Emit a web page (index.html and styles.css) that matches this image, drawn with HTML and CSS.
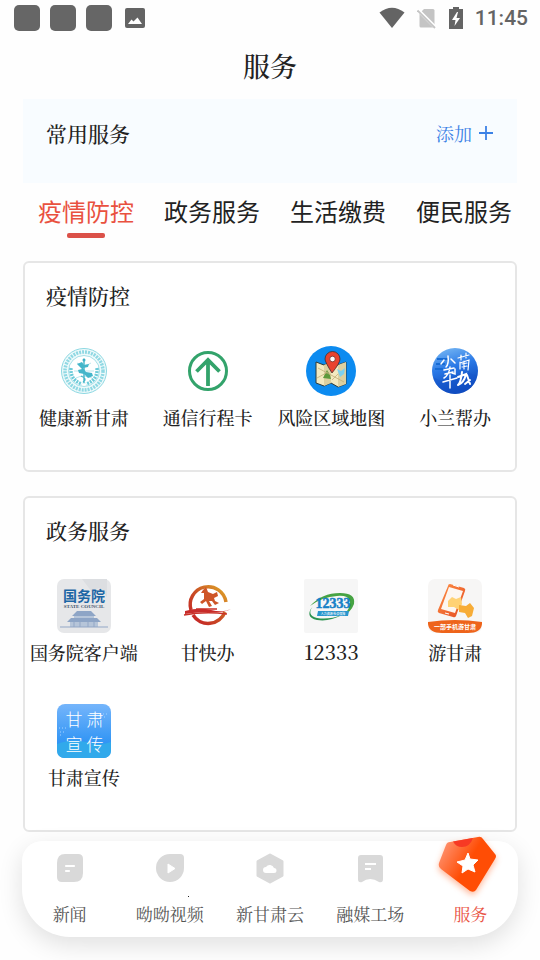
FILE: index.html
```
<!DOCTYPE html>
<html lang="zh-CN">
<head>
    <meta charset="UTF-8">
    <meta name="viewport" content="width=device-width, initial-scale=1.0">
    <title>服务</title>
    <link rel="stylesheet" href="styles.css">
</head>
<body>
    <!-- 状态栏 -->
    <div class="status-bar">
        <div class="status-left">
            <span class="app-dot"></span>
            <span class="app-dot"></span>
            <span class="app-dot"></span>
            <svg class="picture-icon" viewBox="0 0 20 20">
                <rect width="20" height="20" rx="2" fill="#646464"/>
                <path d="M3 16 L6.5 11.5 L8.5 13.5 L12.5 9.5 L17 16 Z" fill="#fff"/>
            </svg>
        </div>
        <div class="status-right">
            <svg width="26" height="22" viewBox="0 0 26 22">
                <path d="M0.5 5.5 Q13 -4 25.5 5.5 L13 21 Z" fill="#646464"/>
            </svg>
            <svg width="20" height="22" viewBox="0 0 20 22">
                <path d="M7 2 H16 Q17.5 2 17.5 3.5 V19 Q17.5 20.5 16 20.5 H4 Q2.5 20.5 2.5 19 V6.5 Z" fill="#c4c4c4"/>
                <path d="M0.5 2.5 L19 21" stroke="#fff" stroke-width="3.5"/>
                <path d="M0.5 3.5 L18 21" stroke="#c4c4c4" stroke-width="1.8"/>
            </svg>
            <svg width="14" height="22" viewBox="0 0 14 22">
                <path d="M4 0 H10 V2 H14 V22 H0 V2 H4 Z" fill="#646464"/>
                <path d="M8 5 L3 13 H6.5 L5.5 19 L11 11 H7.5 L9 5 Z" fill="#fff"/>
            </svg>
            <span class="clock">11:45</span>
        </div>
    </div>

    <h1>服务</h1>

    <main>
        <!-- 常用服务 -->
        <section class="common">
            <h2>常用服务</h2>
            <button class="add-button">添加
                <svg width="14" height="14" viewBox="0 0 14 14">
                    <path d="M7 0 V14 M0 7 H14" stroke="#3c82e6" stroke-width="1.8"/>
                </svg>
            </button>
        </section>

        <!-- 分类标签 -->
        <div class="tabs">
            <button class="tab active">疫情防控</button>
            <button class="tab">政务服务</button>
            <button class="tab">生活缴费</button>
            <button class="tab">便民服务</button>
        </div>

        <section class="card">
            <h2>疫情防控</h2>
            <div class="services">
                <a class="service" href="#">
                    <svg class="service-icon" viewBox="0 0 54 54">
                        <circle cx="27" cy="27" r="22.5" fill="#effafb" stroke="#8cd8e2" stroke-width="1"/>
                        <circle cx="27" cy="27" r="19" fill="none" stroke="#8fd8e3" stroke-width="3.5" stroke-dasharray="2 1"/>
                        <circle cx="27" cy="27" r="15.5" fill="#fff" stroke="#a5e0e8" stroke-width="1"/>
                        <path d="M17 27 H37 M27 14 V40 M20 19 Q27 24 34 19 M19 34 Q27 30 35 34" fill="none" stroke="#a9e0e8" stroke-width="0.8"/>
                        <path d="M14 24 Q13 36 25 40 M40 24 Q41 36 29 40" fill="none" stroke="#6ccbd9" stroke-width="3.5" stroke-dasharray="2 1"/>
                        <path d="M20 20 L25 18 L27 21 L32 20 L31 23 L26 24 L29 28 L35 29 L36 32 L31 34 L27 30 L22 29 L21 26 L25 25 Z" fill="#45b6ca"/>
                        <circle cx="27" cy="16" r="1.5" fill="#38aec4"/>
                        <path d="M27 16 V39 M24 32 Q31 35 26 38" fill="none" stroke="#45b6ca" stroke-width="1.3"/>
                    </svg>
                    <span>健康新甘肃</span>
                </a>
                <a class="service" href="#">
                    <svg class="service-icon" viewBox="0 0 54 54">
                        <circle cx="27" cy="27" r="18.5" fill="#fff" stroke="#33a36b" stroke-width="3"/>
                        <path d="M27 42 V15 M15.500 27.500 L27 16 L38.500 27.500" fill="none" stroke="#33a36b" stroke-width="3.8"/>
                    </svg>
                    <span>通信行程卡</span>
                </a>
                <a class="service" href="#">
                    <svg class="service-icon" viewBox="0 0 54 54">
                        <circle cx="27" cy="27" r="25" fill="#0c8bf0"/>
                        <path d="M12 18 L20 21 L27 18 L34 21 L42 18 V40 L34 43 L27 39 L20 42 L12 39 Z" fill="#f3e9c0" stroke="#2c3a3a" stroke-width="1"/>
                        <path d="M20 21 L27 18 V39 L20 42 Z M34 21 L42 18 V40 L34 43 Z" fill="#ddd0a0"/>
                        <path d="M19 34 L23 26 L26 31 L27 35 Z" fill="#5f9a3c"/>
                        <path d="M33 25 L37 27 L41 24 L40 30 L36 33 Z" fill="#7ed0ee"/>
                        <path d="M14 24 L40 38 M13 34 L24 28 M28 36 L34 30" fill="none" stroke="#c0ad79" stroke-width="0.8"/>
                        <path d="M28 29 Q21 18 21 15 A7.5 7.5 0 0 1 36 15 Q36 19 28 29 Z" fill="#e9432f" stroke="#443030" stroke-width="0.8"/>
                        <circle cx="28.5" cy="15" r="2.8" fill="#fff" stroke="#702c25" stroke-width="0.8"/>
                    </svg>
                    <span>风险区域地图</span>
                </a>
                <a class="service" href="#">
                    <svg class="service-icon" viewBox="0 0 54 54">
                        <defs>
                            <linearGradient id="lan" x1="0" y1="0" x2="0.3" y2="1">
                                <stop offset="0" stop-color="#80bff5"/>
                                <stop offset="0.5" stop-color="#2978e6"/>
                                <stop offset="1" stop-color="#0a45b8"/>
                            </linearGradient>
                        </defs>
                        <circle cx="27" cy="27" r="23" fill="url(#lan)"/>
                        <path d="M5 33 L13 37 L28 32 L39 28 L49 32 Q45 48 27 50 Q9 48 5 33 Z" fill="#1556cc" opacity="0.5"/>
                        <path d="M9 15 H20 M8 20 H17 M7 25 H15" stroke="#176bd4" stroke-width="2"/>
                        <path d="M20 12 Q21 20 18 23 M16 16 L13 20 M23 15 L27 19 M16 26 L26 24 M17 30 L25 28 M22 23 Q21 31 16 34 M27 25 V30 L24 29 M15 38 L29 34 M22 31 V44" fill="none" stroke="#fff" stroke-width="1.5" stroke-linecap="round"/>
                        <path d="M30 14 L41 11 M33 11 V16 M38 9 V14 M32 18 V25 M32 19 L41 16 L40 26 M34 20 L39 19 M36 17 V25 M34 23 L39 22" fill="none" stroke="#fff" stroke-width="1.2" stroke-linecap="round"/>
                        <path d="M30 33 L38 30 Q36 39 30 41 M34 28 Q33 38 30 41 M39 31 L42 40 M37 40 L42 36" fill="none" stroke="#fff" stroke-width="2" stroke-linecap="round"/>
                    </svg>
                    <span>小兰帮办</span>
                </a>
            </div>
        </section>

        <section class="card">
            <h2>政务服务</h2>
            <div class="services">
                <a class="service" href="#">
                    <svg class="service-icon" viewBox="0 0 54 54">
                        <rect width="54" height="54" rx="7" fill="#e6e7e9"/>
                        <path d="M25 0 H50 V18 L42 9 L35 13 Z" fill="#dcdee1"/>
                        <text x="27" y="22" class="logo-text" font-size="14" font-weight="bold" fill="#1c66a5">国务院</text>
                        <text x="27" y="29" class="logo-serif" font-size="5" font-weight="bold" fill="#44566e">STATE COUNCIL</text>
                        <path d="M20 32 H34 L39 37 H15 Z M14 39 H40 L44 43 H10 Z" fill="#8ea5c6"/>
                        <path d="M17 37 H37 V39 H17 Z M13 43 H41 V48 H13 Z" fill="#b6c5d9"/>
                        <path d="M3 48 H51 M17 43 V48 M23 43 V48 M31 43 V48 M37 43 V48" stroke="#93a7c6" stroke-width="1"/>
                    </svg>
                    <span>国务院客户端</span>
                </a>
                <a class="service" href="#">
                    <svg class="service-icon" viewBox="0 0 54 54">
                        <defs>
                            <linearGradient id="horse" x1="0" y1="1" x2="1" y2="0">
                                <stop offset="0" stop-color="#c41f27"/>
                                <stop offset="0.5" stop-color="#c94e24"/>
                                <stop offset="1" stop-color="#e0a928"/>
                            </linearGradient>
                        </defs>
                        <path d="M10 31 A18 18 0 1 1 45 23 M12 36 A18 18 0 0 0 44 33" fill="none" stroke="url(#horse)" stroke-width="3.5"/>
                        <path d="M4 32 Q18 28 30 31 T50 30 Q42 34 31 33 Q15 33 4 35 Z" fill="#c82b29"/>
                        <path d="M3 36 Q24 32 46 35 M15 30 H36" fill="none" stroke="#c93128" stroke-width="1.5"/>
                        <path d="M22 11 L25 8 L27 13 L32 15 L36 13 L37 17 L33 19 L34 22 L38 24 L34 26 L31 22 L28 22 L31 27 L28 28 L25 22 L21 25 L19 23 L23 20 L23 14 L20 14 Z" fill="#ce5527"/>
                    </svg>
                    <span>甘快办</span>
                </a>
                <a class="service" href="#">
                    <svg class="service-icon" viewBox="0 0 54 54">
                        <rect width="54" height="54" rx="2" fill="#f6f6f6"/>
                        <path d="M6 27 Q18 14 36 14 Q52 14 50 25 Q47 33 39 37 Q47 29 46 22 Q44 16 33 17 Q18 18 6 27 Z" fill="#46a343"/>
                        <path d="M9 27 Q2 36 13 39 Q25 41 38 36 Q25 43 13 41 Q0 38 9 27 Z" fill="#2b9350"/>
                        <text x="29" y="29" class="logo-serif" font-size="14" font-weight="bold" fill="#1681c7" stroke="#1681c7" stroke-width="0.5">12333</text>
                        <path d="M14 32 H45 L44 37 H13 Z" fill="#2996cd"/>
                        <text x="29" y="36" class="logo-text" font-size="3" fill="#fff">人力资源 社会保障</text>
                    </svg>
                    <span class="number">12333</span>
                </a>
                <a class="service" href="#">
                    <svg class="service-icon" viewBox="0 0 54 54">
                        <defs>
                            <linearGradient id="travel" x1="0" y1="0" x2="1" y2="1">
                                <stop offset="0" stop-color="#ff9145"/>
                                <stop offset="1" stop-color="#e44b22"/>
                            </linearGradient>
                        </defs>
                        <rect width="54" height="54" rx="7" fill="#f7f6f5"/>
                        <path d="M22 5 L36 9 Q38 10 37 12 L28 37 Q27 39 25 38 L11 34 Q9 33 10 31 L20 7 Q20 5 22 5 Z" fill="url(#travel)"/>
                        <path d="M21 8 L35 12 L27 34 L13 30 Z" fill="#fdf6f0"/>
                        <path d="M25 6 L31 8 M17 34 L21 35" stroke="#fff" stroke-width="1"/>
                        <path d="M20 22 L24 18 L28 20 L33 18 L34 25 L31 31 L26 28 L20 28 Z" fill="#ffd274"/>
                        <path d="M31 26 L38 27 L42 24 L46 29 L44 37 L40 39 L37 34 L31 33 Z" fill="#f7ac36"/>
                        <path d="M0 43 Q27 39 54 43 V45 Q53 54 40 54 H14 Q1 54 0 45 Z" fill="#ee641b"/>
                        <text x="27" y="50" class="logo-text" font-size="6" font-weight="bold" fill="#fff">一部手机游甘肃</text>
                    </svg>
                    <span>游甘肃</span>
                </a>
                <a class="service" href="#">
                    <svg class="service-icon" viewBox="0 0 54 54">
                        <defs>
                            <linearGradient id="sky" x1="0" y1="0" x2="0" y2="1">
                                <stop offset="0" stop-color="#75b5fb"/>
                                <stop offset="1" stop-color="#1688f2"/>
                            </linearGradient>
                        </defs>
                        <rect width="54" height="54" rx="8" fill="url(#sky)"/>
                        <path d="M0 40 Q15 34 29 38 T54 38 V46 Q54 54 46 54 H8 Q0 54 0 46 Z" fill="#31a9eb"/>
                        <path d="M2 24 H11 M3 28 H8 M43 10 H52 M44 13 H50 M3 31 H6" stroke="#a7d3ff" stroke-width="1" stroke-dasharray="1 2"/>
                        <text x="17" y="22" class="logo-text thin" font-size="17" fill="#fff">甘</text>
                        <text x="38" y="22" class="logo-text thin" font-size="17" fill="#fff">肃</text>
                        <text x="17" y="47" class="logo-text thin" font-size="17" fill="#fff">宣</text>
                        <text x="38" y="47" class="logo-text thin" font-size="17" fill="#fff">传</text>
                    </svg>
                    <span>甘肃宣传</span>
                </a>
            </div>
        </section>
    </main>

    <!-- 底部导航 -->
    <nav class="bottom-nav">
        <a class="nav-item" href="#">
            <svg class="nav-icon" viewBox="0 0 28 28">
                <path d="M9 0 H22 Q27 0 27 5 V19 Q27 28 18 28 H6 Q1 28 1 23 V9 Q1 0 9 0 Z" fill="#d9d9d9"/>
                <path d="M10 12 H18 M10 17 H13" stroke="#fff" stroke-width="2.2" stroke-linecap="round"/>
            </svg>
            <span>新闻</span>
        </a>
        <a class="nav-item" href="#">
            <svg class="nav-icon" viewBox="0 0 28 28">
                <path d="M14 0 H24 Q28 0 28 4 V14 A14 14 0 1 1 14 0 Z" fill="#d9d9d9"/>
                <path d="M12 10 L19 14.5 L12 19 Z" fill="#fff" stroke="#fff" stroke-width="1" stroke-linejoin="round"/>
                <rect x="32" y="42" width="1" height="1" fill="#222"/>
            </svg>
            <span>呦呦视频</span>
        </a>
        <a class="nav-item" href="#">
            <svg class="nav-icon" viewBox="0 0 28 28">
                <path d="M14 1 L26 7.5 V21.5 L14 28 L2 21.5 V7.5 Z" fill="#d9d9d9" stroke="#d9d9d9" stroke-width="3" stroke-linejoin="round"/>
                <path d="M10 19 A3 3 0 0 1 10 13 A4.5 4.5 0 0 1 18 14 A2.5 2.5 0 0 1 18 19 Z" fill="#fff"/>
            </svg>
            <span>新甘肃云</span>
        </a>
        <a class="nav-item" href="#">
            <svg class="nav-icon" viewBox="0 0 28 28">
                <path d="M5 1 H24 Q27 1 27 4 V25 Q27 29 23 28 Q14 22 6 28 Q2 29 2 25 V4 Q2 1 5 1 Z" fill="#d9d9d9"/>
                <path d="M9 10 H20 M9 15 H15" stroke="#fff" stroke-width="2.2"/>
            </svg>
            <span>融媒工场</span>
        </a>
        <a class="nav-item current" href="#">
            <svg class="nav-icon" viewBox="0 0 28 28">
                <defs>
                    <linearGradient id="badge" x1="0" y1="0.2" x2="0.5" y2="0.5">
                        <stop offset="0" stop-color="#ff9574"/>
                        <stop offset="1" stop-color="#ff4d05"/>
                    </linearGradient>
                </defs>
                <path class="badge" d="M-6 -12 L22 -17 Q25 -18 27 -15 L39 0 Q41 2 39 5 L20 36 Q18 39 14 37 L-15 15 Q-18 13 -17 9 L-10 -9 Q-9 -12 -6 -12 Z" fill="url(#badge)"/>
                <path d="M-3 -12.500 L17 -16 Q14 -7 6 -7 Q0 -7 -3 -12.500 Z" fill="#f73924"/>
                <path d="M12 -1 L14 5 L22 6 L17 11 L19 18 L12 15 L6 19 L7 12 L1 8 L9 6 Z" fill="#fff" stroke="#fff" stroke-width="1" stroke-linejoin="round"/>
            </svg>
            <span>服务</span>
        </a>
    </nav>
</body>
</html>
```
FILE: styles.css
```
/* 基本样式 */
* {
    box-sizing: border-box;
}

body {
    margin: 0;
    min-height: 100vh;
    display: flex;
    flex-direction: column;
    background-color: #fefefe;
    color: #222;
    font-family: "Noto Serif CJK SC", "Noto Serif SC", "Noto Sans CJK SC", serif;
}

button {
    border: none;
    padding: 0;
    background: none;
    font-family: inherit;
    cursor: pointer;
}

a {
    color: inherit;
    text-decoration: none;
}

h1,
h2 {
    margin: 0;
    font-weight: 500;
}

h1 {
    font-size: 27px;
    line-height: 36px;
    margin: 12px 0 15px;
    text-align: center;
}

h2 {
    font-size: 21px;
    line-height: 28px;
}

/* 状态栏 */
.status-bar {
    display: flex;
    justify-content: space-between;
    align-items: center;
    height: 36px;
    padding: 0 12px 0 14px;
}

.status-left {
    display: flex;
    align-items: center;
    gap: 10px;
}

.app-dot {
    width: 26px;
    height: 26px;
    border-radius: 5px;
    background-color: #666;
}

.picture-icon {
    width: 20px;
    height: 20px;
    margin-left: 3px;
}

.status-right {
    display: flex;
    align-items: center;
    gap: 12px;
    color: #646464;
}

.clock {
    font-family: Roboto, sans-serif;
    font-size: 21px;
    font-weight: 500;
    line-height: 24px;
}

main {
    padding: 0 23px;
}

/* 常用服务 */
.common {
    display: flex;
    justify-content: space-between;
    align-items: flex-start;
    height: 84px;
    padding: 20px 24px 0 23px;
    background-color: #f8fcff;
}

.add-button {
    display: flex;
    align-items: center;
    gap: 7px;
    font-size: 18px;
    line-height: 28px;
    color: #3c82e6;
}

/* 分类标签 */
.tabs {
    display: flex;
    gap: 30px;
    margin: 10px -23px 23px 0;
    padding-left: 15px;
    overflow: hidden;
}

.tab {
    flex: none;
    display: flex;
    flex-direction: column;
    align-items: center;
    gap: 5px;
    font-family: "Noto Sans CJK SC", sans-serif;
    font-size: 24px;
    line-height: 35px;
    color: #222;
}

.tab::after {
    content: "";
    width: 38px;
    height: 5px;
    border-radius: 2px;
}

.tab.active {
    color: #e9513f;
}

.tab.active::after {
    background-color: #db5149;
}

/* 服务卡片 */
.card {
    padding: 18px 0 41px;
    border: 2px solid #e6e6e6;
    border-radius: 6px;
    background-color: #fff;
}

.card + .card {
    margin-top: 24px;
}

.card h2 {
    padding-left: 21px;
}

.services {
    display: grid;
    grid-template-columns: repeat(4, 1fr);
    row-gap: 40px;
    margin: 35px -2px 0 -3px;
}

.service {
    display: flex;
    flex-direction: column;
    align-items: center;
    gap: 7px;
    font-size: 18px;
    font-weight: 500;
    line-height: 24px;
    white-space: nowrap;
}

.service-icon {
    width: 54px;
    height: 54px;
}

.number {
    font-size: 20px;
}

.logo-text {
    font-family: "Noto Sans CJK SC", sans-serif;
    text-anchor: middle;
}

.thin {
    font-weight: 300;
}

.logo-serif {
    font-family: "Liberation Serif", serif;
    text-anchor: middle;
}

/* 底部导航 */
.bottom-nav {
    display: grid;
    grid-template-columns: repeat(5, calc(20% + 1px));
    justify-content: center;
    height: 96px;
    margin: 9px 22px 23px;
    padding-top: 13px;
    border-radius: 20px 20px 48px 48px;
    background-color: #fff;
    box-shadow: 0 8px 24px rgba(0, 0, 0, 0.12);
}

.nav-item {
    display: flex;
    flex-direction: column;
    align-items: center;
    gap: 20px;
    font-size: 17px;
    line-height: 24px;
    color: #555;
    white-space: nowrap;
}

.nav-icon {
    width: 28px;
    height: 28px;
    overflow: visible;
}

.nav-item.current {
    color: #e9513f;
}

.badge {
    filter: drop-shadow(0 3px 3px rgba(255, 77, 5, 0.4));
}
```
